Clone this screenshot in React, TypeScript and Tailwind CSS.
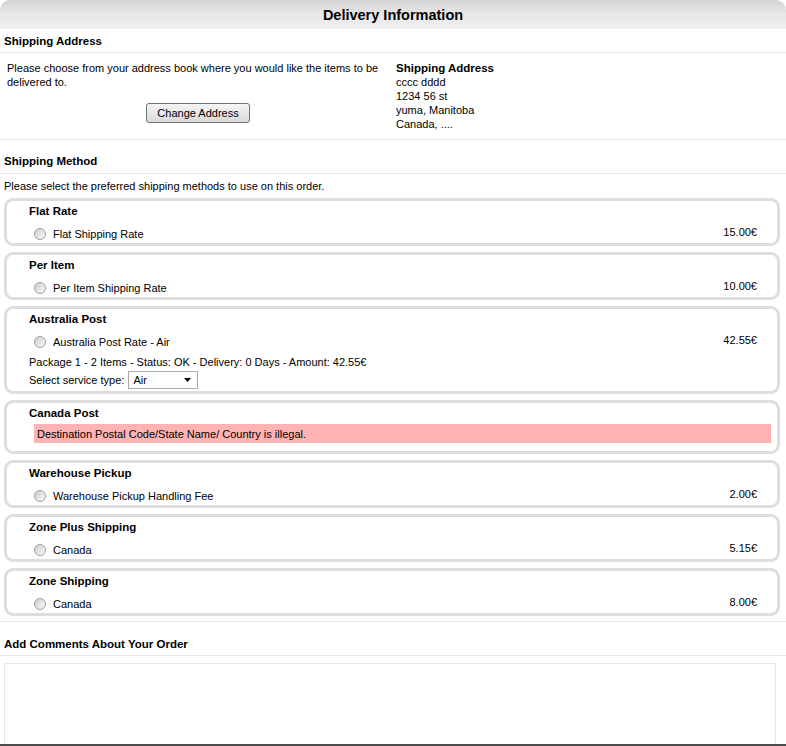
import React from 'react';

type Rate = {
  title: string;
  label: string;
  price: string;
};

const RATES_TOP: Rate[] = [
  { title: 'Flat Rate', label: 'Flat Shipping Rate', price: '15.00€' },
  { title: 'Per Item', label: 'Per Item Shipping Rate', price: '10.00€' },
];

const RATES_BOTTOM: Rate[] = [
  { title: 'Warehouse Pickup', label: 'Warehouse Pickup Handling Fee', price: '2.00€' },
  { title: 'Zone Plus Shipping', label: 'Canada', price: '5.15€' },
  { title: 'Zone Shipping', label: 'Canada', price: '8.00€' },
];

function Radio() {
  return (
    <span className="block w-[12px] h-[12px] rounded-full border border-[#9c9c9c] bg-linear-to-br from-[#c9c9c9] via-[#e4e4e4] to-[#fafafa] shadow-[inset_0_0_1px_#ffffff]" />
  );
}

function RateRow({ label, price }: { label: string; price: string }) {
  return (
    <div className="mt-[7px] h-[16px] flex items-start justify-between pr-[20px]">
      <label className="mt-[2px] h-[14px] flex items-center ml-[27px] gap-[7px]">
        <Radio />
        <span>{label}</span>
      </label>
      <span>{price}</span>
    </div>
  );
}

function Box({ title, children }: { title: string; children: React.ReactNode }) {
  return (
    <div className="border-[3px] border-[#dddddd] rounded-[9px]">
      <div className="pt-[3px] pl-[22px] h-[17px] font-bold text-[11.5px]">{title}</div>
      {children}
    </div>
  );
}

export default function App() {
  return (
    <div className="w-[786px] h-[746px] overflow-hidden bg-white border-b-2 border-[#4d4d4d] text-[11px] leading-[14px] text-black font-['Liberation_Sans',Arial,sans-serif]">
      {/* title bar */}
      <div className="h-[29px] rounded-t-[10px] bg-linear-to-b from-[#d3d3d3] via-[#e8e8e8] to-[#eeeeee] flex items-center justify-center text-[14.5px] font-bold">
        Delivery Information
      </div>

      {/* Shipping address */}
      <div className="px-[4px] pt-[5px] pb-[4px] font-bold text-[11.5px] border-b border-[#e6e6e6]">Shipping Address</div>
      <div className="flex pt-[8px] pb-[8px] border-b border-[#e6e6e6]">
        <div className="w-[392px] pl-[7px] pr-[3px]">
          <p>Please choose from your address book where you would like the items to be delivered to.</p>
          <button
            type="button"
            className="mt-[14px] mx-auto flex items-center justify-center h-[20px] w-[104px] border border-[#707070] rounded-[3px] bg-linear-to-b from-[#f6f6f6] to-[#d9d9d9] text-[11px] leading-[14px]"
          >
            Change Address
          </button>
        </div>
        <div className="ml-[4px]">
          <div className="font-bold text-[11.5px]">Shipping Address</div>
          <div>cccc dddd</div>
          <div>1234 56 st</div>
          <div>yuma, Manitoba</div>
          <div>Canada, ....</div>
        </div>
      </div>

      {/* Shipping method */}
      <div className="px-[4px] pt-[14px] pb-[5px] font-bold text-[11.5px] border-b border-[#e6e6e6]">Shipping Method</div>
      <p className="px-[4px] pt-[5px]">Please select the preferred shipping methods to use on this order.</p>

      <div className="pt-[5px] pb-[5px] border-b border-[#e6e6e6]">
        <div className="ml-[4px] mr-[6px] flex flex-col gap-[6px]">
          {RATES_TOP.map((r) => (
            <Box key={r.title} title={r.title}>
              <RateRow label={r.label} price={r.price} />
              <div className="h-[2px]" />
            </Box>
          ))}

          <Box title="Australia Post">
            <RateRow label="Australia Post Rate - Air" price="42.55€" />
            <div className="mt-[6px] pl-[22px]">Package 1 - 2 Items - Status: OK - Delivery: 0 Days - Amount: 42.55€</div>
            <div className="mt-[2px] pl-[22px] h-[18px] flex items-center">
              <span>Select service type:</span>
              <div className="ml-[4px] w-[70px] h-[18px] border border-[#a9a9a9] bg-white flex items-center justify-between pl-[4px] pr-[6px]">
                <span>Air</span>
                <svg width="7" height="4" viewBox="0 0 7 4">
                  <path d="M0 0 L7 0 L3.5 4 Z" fill="#000" />
                </svg>
              </div>
            </div>
            <div className="h-[2px]" />
          </Box>

          <Box title="Canada Post">
            <div className="mt-[4px] ml-[27px] mr-[6px] h-[19px] bg-[#ffb3b3] pl-[3px] flex items-center">
              Destination Postal Code/State Name/ Country is illegal.
            </div>
            <div className="h-[8px]" />
          </Box>

          {RATES_BOTTOM.map((r) => (
            <Box key={r.title} title={r.title}>
              <RateRow label={r.label} price={r.price} />
              <div className="h-[2px]" />
            </Box>
          ))}
        </div>
      </div>

      {/* Comments */}
      <div className="px-[4px] pt-[15px] pb-[4px] font-bold text-[11.5px] border-b border-[#e6e6e6]">Add Comments About Your Order</div>
      <textarea className="block mt-[7px] ml-[4px] w-[772px] h-[100px] border border-[#e6e6e6] resize-none outline-none" />
    </div>
  );
}
